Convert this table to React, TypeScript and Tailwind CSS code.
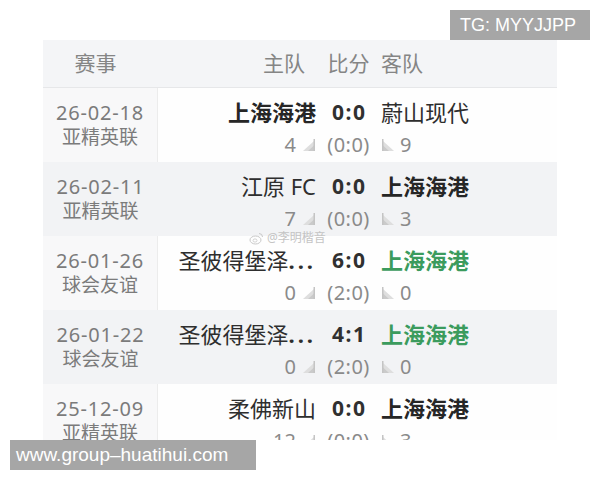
import React from 'react';

type Match = {
  date: string;
  comp: string;
  home: string;
  cut?: boolean;
  score: string;
  away: string;
  hc: string;
  half: string;
  ac: string;
  bold: 'home' | 'away';
  green?: boolean;
};

const MATCHES: Match[] = [
  { date: '26-02-18', comp: '亚精英联', home: '上海海港', score: '0:0', away: '蔚山现代', hc: '4', half: '(0:0)', ac: '9', bold: 'home' },
  { date: '26-02-11', comp: '亚精英联', home: '江原 FC', score: '0:0', away: '上海海港', hc: '7', half: '(0:0)', ac: '3', bold: 'away' },
  { date: '26-01-26', comp: '球会友谊', home: '圣彼得堡泽', cut: true, score: '6:0', away: '上海海港', hc: '0', half: '(2:0)', ac: '0', bold: 'away', green: true },
  { date: '26-01-22', comp: '球会友谊', home: '圣彼得堡泽', cut: true, score: '4:1', away: '上海海港', hc: '0', half: '(2:0)', ac: '0', bold: 'away', green: true },
  { date: '25-12-09', comp: '亚精英联', home: '柔佛新山', score: '0:0', away: '上海海港', hc: '12', half: '(0:0)', ac: '3', bold: 'away' },
];

const FONT = "font-['Noto_Sans','Noto_Sans_CJK_SC',sans-serif]";

const CornerLeft = () => (
  <svg width="14" height="14" viewBox="0 0 14 14" className="shrink-0">
    <polygon points="1,13 12,3 12,13" fill="#dedede" />
    <polygon points="6,13 12,7.5 12,13" fill="#cacaca" />
    <rect x="11.5" y="1" width="1.5" height="12" fill="#c4c4c4" />
  </svg>
);

const CornerRight = () => (
  <svg width="14" height="14" viewBox="0 0 14 14" className="shrink-0">
    <polygon points="2,3 2,13 13,13" fill="#dedede" />
    <polygon points="2,7.5 2,13 8,13" fill="#cacaca" />
    <rect x="1" y="1" width="1.5" height="12" fill="#c4c4c4" />
  </svg>
);

const teamClass = (isBold: boolean, green?: boolean) => {
  if (isBold && green) return 'font-bold text-[#3b9b5d]';
  if (isBold) return 'font-bold text-[#262626]';
  return 'font-normal text-[#2e2e2e]';
};

const Row: React.FC<{ m: Match; shaded: boolean }> = ({ m, shaded }) => (
  <div className={`flex h-[74px] shrink-0 ${shaded ? 'bg-[#f2f3f5]' : 'bg-[#fefefe]'}`}>
    <div
      className={`w-[115px] shrink-0 flex flex-col items-center justify-center text-[#7b7b7b] ${
        shaded ? '' : 'bg-[#f8f8f9] border-r border-[#ececec]'
      }`}
    >
      <span className="text-[20px] leading-[24px] tracking-[0.8px]">{m.date}</span>
      <span className="text-[19px] leading-[24px]">{m.comp}</span>
    </div>
    <div className="flex-1 grid grid-cols-[158px_49px_1fr] gap-x-2 gap-y-[3px] pt-[9px] content-start">
      <span className={`text-right text-[22px] leading-[30px] whitespace-nowrap ${teamClass(m.bold === 'home')}`}>
        {m.home}
        {m.cut && <span className="font-bold tracking-[3px]">...</span>}
      </span>
      <span className="text-center text-[21px] leading-[30px] font-bold text-[#303030] tracking-[1.5px] pl-[1.5px]">
        {m.score}
      </span>
      <span className={`text-left text-[22px] leading-[30px] whitespace-nowrap ${teamClass(m.bold === 'away', m.green)}`}>
        {m.away}
      </span>

      <span className="flex items-center justify-end gap-[6px] text-[20px] leading-[30px] text-[#8a8a8a]">
        {m.hc}
        <CornerLeft />
      </span>
      <span className="text-center text-[20px] leading-[30px] text-[#8a8a8a] tracking-[0.5px] whitespace-nowrap">
        {m.half}
      </span>
      <span className="flex items-center gap-[5px] text-[20px] leading-[30px] text-[#8a8a8a]">
        <CornerRight />
        {m.ac}
      </span>
    </div>
  </div>
);

export default function App() {
  return (
    <div className={`relative w-[600px] h-[480px] bg-white overflow-hidden ${FONT}`}>
      <div className="pt-[40px] pl-[43px]">
        <div className="w-[514px] h-[400px] overflow-hidden flex flex-col">
          <div className="flex h-[48px] shrink-0 bg-[#f4f5f7] border-b border-[#e6e7e9] text-[#858585] text-[21px]">
            <div className="w-[115px] shrink-0 flex items-center justify-center pr-[10px]">赛事</div>
            <div className="flex-1 grid grid-cols-[158px_49px_1fr] gap-x-2 items-center">
              <span className="text-right pr-[11px]">主队</span>
              <span className="text-center whitespace-nowrap">比分</span>
              <span className="text-left">客队</span>
            </div>
          </div>
          {MATCHES.map((m, i) => (
            <Row key={m.date} m={m} shaded={i % 2 === 1} />
          ))}
        </div>
      </div>

      {/* weibo watermark */}
      <div className="absolute left-[249px] top-[231px] flex items-center gap-[3px] text-[12px] leading-[14px] text-[#c4c4c4]">
        <svg width="15" height="13" viewBox="0 0 15 13">
          <ellipse cx="6.5" cy="8" rx="5.5" ry="4" fill="none" stroke="#c8c8c8" strokeWidth="1" />
          <ellipse cx="6" cy="8.5" rx="2" ry="1.6" fill="none" stroke="#c8c8c8" strokeWidth="0.8" />
          <path d="M10 1.5 A3.5 3.5 0 0 1 13.5 5" fill="none" stroke="#c8c8c8" strokeWidth="1" />
        </svg>
        <span>@李明楷音</span>
      </div>

      <div className="absolute left-[450px] top-[10px] w-[140px] h-[30px] bg-[#a6a6a6] text-white font-['Liberation_Sans',sans-serif] text-[18px] leading-[30px] pl-[10px]">
        TG: MYYJJPP
      </div>
      <div className="absolute left-[10px] top-[440px] w-[246px] h-[30px] bg-[#a6a6a6] text-white font-['Liberation_Sans',sans-serif] text-[19px] leading-[30px] pl-[6px]">
        www.group–huatihui.com
      </div>
    </div>
  );
}
